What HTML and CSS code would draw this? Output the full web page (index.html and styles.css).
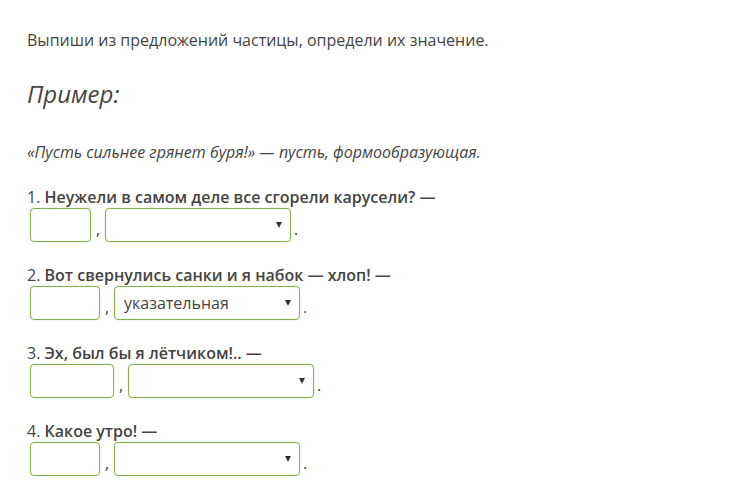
FILE: index.html
```html
<!DOCTYPE html>
<html lang="ru">
<head>
<meta charset="utf-8">
<link rel="stylesheet" href="styles.css">
</head>
<body>
<div class="page">
  <p class="task">Выпиши из предложений частицы, определи их значение.</p>
  <h2 class="example-title">Пример:</h2>
  <p class="example">«Пусть сильнее грянет буря!» — пусть, формообразующая.</p>

  <div class="item">
    <div class="q">1. <b>Неужели в самом деле все сгорели карусели? —</b></div>
    <div class="a"><span class="inp" style="width:61px"></span><span class="sep">,</span><span class="sel"><span class="val"></span><span class="arrow"></span></span><span class="dot">.</span></div>
  </div>

  <div class="item">
    <div class="q">2. <b>Вот свернулись санки и я набок — хлоп! —</b></div>
    <div class="a"><span class="inp" style="width:70px"></span><span class="sep">,</span><span class="sel"><span class="val">указательная</span><span class="arrow"></span></span><span class="dot">.</span></div>
  </div>

  <div class="item">
    <div class="q">3. <b>Эх, был бы я лётчиком!.. —</b></div>
    <div class="a"><span class="inp" style="width:84px"></span><span class="sep">,</span><span class="sel"><span class="val"></span><span class="arrow"></span></span><span class="dot">.</span></div>
  </div>

  <div class="item">
    <div class="q">4. <b>Какое утро! —</b></div>
    <div class="a"><span class="inp" style="width:70px"></span><span class="sep">,</span><span class="sel"><span class="val"></span><span class="arrow"></span></span><span class="dot">.</span></div>
  </div>
</div>
</body>
</html>
```

FILE: styles.css
```css
html, body {
  margin: 0;
  padding: 0;
  background: #fff;
}
body {
  font-family: "Open Sans", "Liberation Sans", sans-serif;
  color: #444;
  font-size: 16px;
}
.page {
  padding: 29px 27px 0 27px;
}
.task {
  margin: 0;
  line-height: 22px;
}
.example-title {
  margin: 27px 0 0 0;
  font-size: 24px;
  font-style: italic;
  font-weight: 400;
  line-height: 32px;
}
.example {
  margin: 31px 0 0 0;
  font-style: italic;
  line-height: 22px;
}
.item {
  margin-top: 23px;
}
.item + .item {
  margin-top: 22px;
}
.q {
  line-height: 22px;
}
.q b {
  font-weight: 600;
}
.a {
  display: flex;
  align-items: flex-end;
  padding-left: 3px;
  height: 34px;
}
.inp, .sel {
  box-sizing: border-box;
  height: 34px;
  border: 1px solid #86b04a;
  border-radius: 4px;
  background: #fff;
  box-shadow: 0 0 2px rgba(140, 180, 80, 0.35);
  flex: none;
}
.sel {
  width: 186px;
  display: flex;
  align-items: center;
  padding: 0 8px 0 9px;
}
.val {
  color: #444;
  font-size: 16px;
}
.arrow {
  width: 0;
  height: 0;
  border-left: 3.5px solid transparent;
  border-right: 3.5px solid transparent;
  border-top: 6px solid #333;
  margin-left: auto;
}
.sep {
  width: 14px;
  text-align: center;
  line-height: 22px;
  padding-bottom: 2px;
}
.dot {
  width: 10px;
  text-align: center;
  line-height: 22px;
  padding-bottom: 2px;
}
```
